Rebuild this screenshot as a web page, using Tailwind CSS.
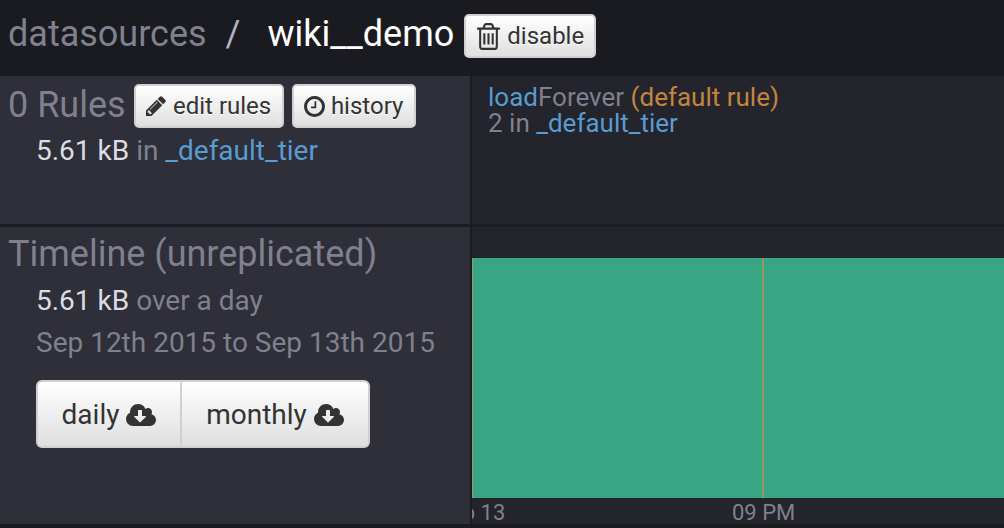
<!DOCTYPE html>
<html lang="en">
<head>
    <meta charset="UTF-8">
    <title>wiki__demo</title>
    <script src="https://cdn.jsdelivr.net/npm/@tailwindcss/browser@4"></script>
</head>
<body class="bg-[#1b1c22] font-['Roboto',sans-serif] w-[1004px] h-[528px] overflow-hidden">

    <!-- page title -->
    <header class="h-[76px] bg-[#1a1b21] flex items-start pl-2 pt-[14px]">
        <span class="text-[36px] leading-[40px] text-[#80808f]">datasources</span>
        <span class="text-[36px] leading-[40px] text-[#b4b4bc] ml-[19px]">/</span>
        <span class="text-[36px] leading-[40px] text-white ml-[27px]">wiki__demo</span>
        <button class="ml-[10px] h-[44px] w-[132px] flex items-center justify-center gap-[6px] rounded-[5px] border-2 border-[#d0d0d0] bg-gradient-to-b from-white to-[#dfdfdf] text-[#333] text-[24px] [text-shadow:0_1px_0_#fff]">
            <svg width="25" height="27" viewBox="128 128 1536 1536" preserveAspectRatio="none" fill="#333">
                <path d="M704 736v576q0 14-9 23t-23 9h-64q-14 0-23-9t-9-23v-576q0-14 9-23t23-9h64q14 0 23 9t9 23zm256 0v576q0 14-9 23t-23 9h-64q-14 0-23-9t-9-23v-576q0-14 9-23t23-9h64q14 0 23 9t9 23zm256 0v576q0 14-9 23t-23 9h-64q-14 0-23-9t-9-23v-576q0-14 9-23t23-9h64q14 0 23 9t9 23zm128 724v-948h-896v948q0 22 7 40.500t14.500 27 10.500 8.500h832q3 0 10.500-8.500t14.500-27 7-40.500zm-672-1076h448l-48-117q-7-9-17-11h-317q-10 2-17 11zm928 32v64q0 14-9 23t-23 9h-96v948q0 83-47 143.500t-113 60.500h-832q-66 0-113-58.500t-47-141.500v-952h-96q-14 0-23-9t-9-23v-64q0-14 9-23t23-9h309l70-167q15-37 54-63t79-26h320q40 0 79 26t54 63l70 167h309q14 0 23 9t9 23z"/>
            </svg>
            disable
        </button>
    </header>

    <!-- rules row -->
    <section class="flex h-[151px] border-b-[3px] border-[#1c1d22]">
        <div class="w-[470px] bg-[#2e2f39] pl-2 pt-2">
            <div class="flex items-center h-[44px]">
                <span class="text-[36px] leading-[40px] text-[#80808f] -mt-[3px]">0 Rules</span>
                <button class="ml-2 h-[44px] w-[150px] flex items-center justify-center gap-[7px] rounded-[5px] border-2 border-[#d0d0d0] bg-gradient-to-b from-white to-[#dfdfdf] text-[#333] text-[24px] [text-shadow:0_1px_0_#fff]">
                    <svg width="20" height="20" viewBox="128 128 1536 1536" fill="#333">
                        <path d="M491 1536l91-91-235-235-91 91v107h128v128h107zm523-928q0-22-22-22-10 0-17 7l-542 542q-7 7-7 17 0 22 22 22 10 0 17-7l542-542q7-7 7-17zm-54-192l416 416-832 832h-416v-416zm683 96q0 53-37 90l-166 166-416-416 166-165q36-38 90-38 53 0 91 38l235 234q37 39 37 91z"/>
                    </svg>
                    edit rules
                </button>
                <button class="ml-2 h-[44px] w-[124px] flex items-center justify-center gap-[6px] rounded-[5px] border-2 border-[#d0d0d0] bg-gradient-to-b from-white to-[#dfdfdf] text-[#333] text-[24px] [text-shadow:0_1px_0_#fff]">
                    <svg width="21" height="21" viewBox="128 128 1536 1536" fill="#333">
                        <path d="M1024 544v448q0 14-9 23t-23 9h-320q-14 0-23-9t-9-23v-64q0-14 9-23t23-9h224v-352q0-14 9-23t23-9h64q14 0 23 9t9 23zm416 352q0-148-73-273t-198-198-273-73-273 73-198 198-73 273 73 273 198 198 273 73 273-73 198-198 73-273zm224 0q0 209-103 385.500t-279.500 279.500-385.500 103-385.500-103-279.500-279.500-103-385.500 103-385.500 279.500-279.500 385.500-103 385.500 103 279.500 279.500 103 385.500z"/>
                    </svg>
                    history
                </button>
            </div>
            <p class="ml-7 mt-[7px] text-[28px] leading-[32px] text-[#80808f]"><span class="text-[#dcdce2]">5.61 kB</span> in <span class="text-[#5a9bd0]">_default_tier</span></p>
        </div>
        <div class="w-[2px] bg-[#1b1c22]"></div>
        <div class="flex-1 bg-[#23242c] pl-[16px] pt-[8px] text-[26px] leading-[26px] text-[#80808f]">
            <p><span class="text-[#5a9bd0]">load</span>Forever <span class="text-[#c4853f]">(default rule)</span></p>
            <p>2 in <span class="text-[#5a9bd0]">_default_tier</span></p>
        </div>
    </section>

    <!-- timeline row -->
    <section class="flex h-[297px]">
        <div class="w-[470px] bg-[#2e2f39] pl-2 pt-[4px]">
            <h2 class="text-[36px] leading-[46px] text-[#80808f]">Timeline (unreplicated)</h2>
            <div class="ml-7 mt-[3px] text-[28px] leading-[42px] text-[#80808f]">
                <p><span class="text-[#dcdce2]">5.61 kB</span> over a day</p>
                <p>Sep 12th 2015 to Sep 13th 2015</p>
            </div>
            <div class="ml-7 mt-[16px] w-[334px] h-[68px] flex rounded-[6px] border-2 border-[#d0d0d0] bg-gradient-to-b from-white to-[#dfdfdf] text-[#333] text-[28px] [text-shadow:0_1px_0_#fff]">
                <button class="w-[144px] pt-[1px] flex items-center justify-center gap-[7px] border-r-2 border-[#d0d0d0]">
                    daily
                    <svg width="30" height="22" viewBox="0 128 1920 1408" fill="#333" fill-rule="evenodd">
                        <path d="M1280 928q0-14-9-23t-23-9h-224v-352q0-13-9.500-22.500t-22.500-9.500h-192q-13 0-22.500 9.500t-9.500 22.500v352h-224q-13 0-22.500 9.500t-9.500 22.500q0 14 9 23l352 352q9 9 23 9t23-9l351-351q10-12 10-24zm640 224q0 159-112.500 271.500t-271.500 112.500h-1088q-185 0-316.500-131.500t-131.500-316.500q0-130 70-240t188-165q-2-30-2-43 0-212 150-362t362-150q156 0 285.500 87t188.500 231q71-62 166-62 106 0 181 75t75 181q0 76-41 138 130 31 213.500 135.500t83.500 238.500z"/>
                    </svg>
                </button>
                <button class="flex-1 pt-[1px] flex items-center justify-center gap-[7px]">
                    monthly
                    <svg width="30" height="22" viewBox="0 128 1920 1408" fill="#333" fill-rule="evenodd">
                        <path d="M1280 928q0-14-9-23t-23-9h-224v-352q0-13-9.500-22.500t-22.500-9.500h-192q-13 0-22.500 9.500t-9.500 22.500v352h-224q-13 0-22.500 9.500t-9.500 22.500q0 14 9 23l352 352q9 9 23 9t23-9l351-351q10-12 10-24zm640 224q0 159-112.500 271.500t-271.500 112.500h-1088q-185 0-316.500-131.500t-131.500-316.500q0-130 70-240t188-165q-2-30-2-43 0-212 150-362t362-150q156 0 285.500 87t188.500 231q71-62 166-62 106 0 181 75t75 181q0 76-41 138 130 31 213.500 135.500t83.500 238.500z"/>
                    </svg>
                </button>
            </div>
        </div>
        <div class="w-[2px] bg-[#1b1c22]"></div>
        <div class="flex-1 bg-[#23242c] pt-[31px] overflow-hidden">
            <div class="relative h-[240px] bg-[#38a682]">
                <div class="absolute left-0 top-0 bottom-0 w-[1px] bg-[#9a9c68]"></div>
                <div class="absolute left-[290px] top-0 bottom-0 w-[2px] bg-[#8f9a68]"></div>
            </div>
            <div class="relative h-[26px] text-[22px] leading-[30px] text-[#80808f]">
                <span class="absolute left-[-34px] whitespace-nowrap">Sep 13</span>
                <span class="absolute left-[260px] whitespace-nowrap">09 PM</span>
            </div>
        </div>
    </section>
</body>
</html>
